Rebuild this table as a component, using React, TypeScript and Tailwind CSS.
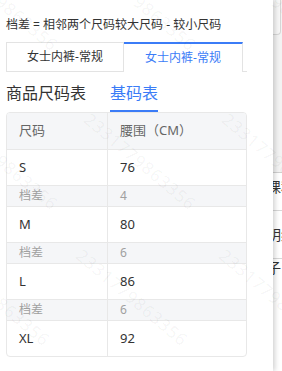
const rows = [
  { size: "S", waist: "76" },
  { diff: "4" },
  { size: "M", waist: "80" },
  { diff: "6" },
  { size: "L", waist: "86" },
  { diff: "6" },
  { size: "XL", waist: "92" },
];

const marks = [
  { left: "left-[-43px]", top: "top-[-52px]" },
  { left: "left-[95px]", top: "top-[-52px]" },
  { left: "left-[233px]", top: "top-[-52px]" },
  { left: "left-[-43px]", top: "top-[107px]" },
  { left: "left-[95px]", top: "top-[107px]" },
  { left: "left-[233px]", top: "top-[107px]" },
  { left: "left-[-51px]", top: "top-[243px]" },
  { left: "left-[87px]", top: "top-[243px]" },
  { left: "left-[230px]", top: "top-[243px]" },
];

export default function App() {
  return (
    <div className="relative flex w-[282px] h-[371px] overflow-hidden bg-white font-['Noto_Sans','Noto_Sans_CJK_SC',sans-serif]">
      {/* drawer panel */}
      <div className="relative z-10 w-[273px] h-full shrink-0 bg-white pl-[6px] pt-[16px] shadow-[2px_0_5px_rgba(0,0,0,0.18)]">
        <p className="text-[12px] leading-[18px] text-[#333]">档差 = 相邻两个尺码较大尺码 - 较小尺码</p>

        {/* tabs */}
        <div className="mt-[8px] flex w-[241px] h-[30px]">
          <div className="w-[118px] border border-[#e3e3e3] flex items-center justify-center text-[12px] text-[#333]">
            女士内裤-常规
          </div>
          <div className="w-[119px] border-t-2 border-r border-t-[#3b7cf7] border-r-[#e3e3e3] flex items-center justify-center text-[12px] text-[#3b7cf7]">
            女士内裤-常规
          </div>
          <div className="flex-1 border-b border-[#e3e3e3]" />
        </div>

        {/* headings */}
        <div className="mt-[9px] flex items-start gap-[24px]">
          <span className="text-[16px] leading-[24px] text-[#333]">商品尺码表</span>
          <span className="text-[16px] leading-[24px] text-[#3b7cf7] pb-[5px] border-b-2 border-[#3b7cf7]">基码表</span>
        </div>

        {/* table */}
        <div className="w-[241px] border border-[#e8e8e8] rounded-[4px] overflow-hidden">
          <div className="flex h-[37px] bg-[#f5f6f8] border-b border-[#e8e8e8] text-[13px] text-[#666]">
            <div className="w-[101px] border-r border-[#e8e8e8] pl-[12px] flex items-center">尺码</div>
            <div className="flex-1 pl-[12px] flex items-center">腰围（CM）</div>
          </div>
          {rows.map((r, i) => {
            const last = i === rows.length - 1;
            if (r.diff) {
              return (
                <div key={i} className="flex h-[21px] bg-[#f5f6f8] border-b border-[#e8e8e8] text-[12px] text-[#a0a0a0]">
                  <div className="w-[101px] border-r border-[#e8e8e8] pl-[12px] flex items-center">档差</div>
                  <div className="flex-1 pl-[12px] flex items-center">{r.diff}</div>
                </div>
              );
            }
            return (
              <div key={i} className={"flex text-[13px] text-[#333] " + (last ? "h-[35px]" : "h-[36px] border-b border-[#e8e8e8]")}>
                <div className="w-[101px] border-r border-[#e8e8e8] pl-[12px] flex items-center">{r.size}</div>
                <div className="flex-1 pl-[12px] flex items-center">{r.waist}</div>
              </div>
            );
          })}
        </div>
      </div>

      {/* page behind the drawer */}
      <div className="flex-1 flex flex-col bg-[#f3f3f3] overflow-hidden">
        <div className="h-[35px] w-[8px] shrink-0 border-r border-b border-[#d6d6d6] rounded-br-[4px] bg-[#f7f7f7]" />
        <div className="h-[137px] shrink-0" />
        <div className="flex-1 bg-white border-t border-[#d0d0d0] text-[14px] text-[#333] -ml-[6px]">
          <div className="h-[26px] flex items-center whitespace-nowrap">课程</div>
          <div className="h-[12px] border-b border-[#d8d8d8]" />
          <div className="h-[48px] flex items-center border-b border-[#d8d8d8] whitespace-nowrap">明细</div>
          <div className="h-[16px] flex items-center whitespace-nowrap">子</div>
        </div>
      </div>

      {/* watermark */}
      <div className="pointer-events-none absolute inset-0 z-20">
        {marks.map((m, i) => (
          <span
            key={i}
            className={"absolute origin-top-left rotate-[40deg] whitespace-nowrap text-[17px] tracking-[1px] text-[rgba(0,0,0,0.05)] " + m.left + " " + m.top}
          >
            2331779863356
          </span>
        ))}
      </div>
    </div>
  );
}
